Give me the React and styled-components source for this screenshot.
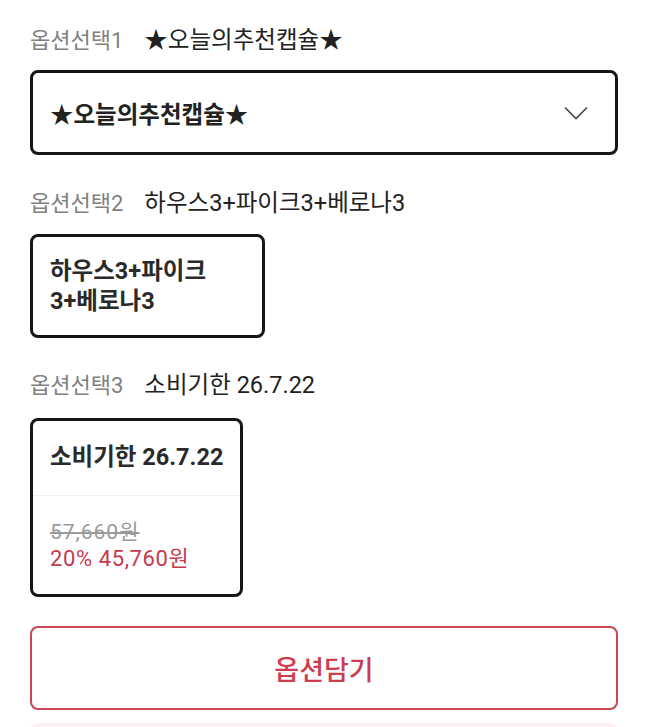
import styled, { createGlobalStyle } from "styled-components";

const GlobalStyle = createGlobalStyle`
  * { box-sizing: border-box; }
  body {
    margin: 0;
    background: #fff;
    font-family: Roboto, "Noto Sans CJK KR", "Noto Sans", sans-serif;
    color: #222;
  }
`

const Page = styled.div`
  padding: 25px 30px 0 30px;
  display: flex;
  flex-direction: column;
`

const Section = styled.div`
  display: flex;
  flex-direction: column;
  align-items: flex-start;
  margin-bottom: ${(p) => p.$gap || 32}px;
`

const Label = styled.div`
  display: flex;
  align-items: baseline;
  gap: 21px;
  height: 30px;
  line-height: 30px;
  margin-bottom: ${(p) => p.$space || 16}px;
`

const LabelKey = styled.span`
  font-size: 22px;
  color: #808080;
`

const LabelValue = styled.span`
  font-size: 23.5px;
  color: #222;
`

const Select = styled.div`
  width: 100%;
  height: 85px;
  border: 3px solid #161616;
  border-radius: 8px;
  display: flex;
  align-items: center;
  justify-content: space-between;
  padding: 0 27px 0 17px;
  font-size: 23.5px;
  font-weight: 700;
  color: #222;
`

const Chevron = () => (
  <svg width="24" height="14" viewBox="0 0 24 14" fill="none">
    <path d="M1 1.5 L12 12.5 L23 1.5" stroke="#444" strokeWidth="1.6" />
  </svg>
)

const Card = styled.div`
  width: ${(p) => p.$width}px;
  border: 3px solid #161616;
  border-radius: 8px;
  display: flex;
  flex-direction: column;
`

const CardText = styled.div`
  padding: 19px 22px 19px 17px;
  font-size: 23.5px;
  font-weight: 700;
  line-height: 30px;
  color: #2a2a2a;
`

const CardTitle = styled.div`
  padding: 22px 8px 24px 17px;
  font-size: 23.5px;
  font-weight: 700;
  line-height: 28px;
  color: #2a2a2a;
  border-bottom: 1px solid #efefef;
  white-space: nowrap;
`

const PriceBox = styled.div`
  padding: 23px 8px 21px 17px;
  display: flex;
  flex-direction: column;
`

const OldPrice = styled.div`
  font-size: 21px;
  letter-spacing: 1px;
  line-height: 26px;
  color: #9a9a9a;
  text-decoration: line-through;
`

const NewPrice = styled.div`
  font-size: 22px;
  letter-spacing: 0.6px;
  line-height: 28px;
  color: #c43a4e;
  white-space: nowrap;
`

const AddButton = styled.button`
  width: 100%;
  height: 84px;
  border: 2px solid #c94654;
  border-radius: 8px;
  background: #fff;
  color: #cc3e50;
  font-family: Roboto, "Noto Sans CJK KR", "Noto Sans", sans-serif;
  font-size: 27px;
  font-weight: 500;
  margin-bottom: 13px;
`

const NextBar = styled.div`
  width: 100%;
  height: 20px;
  background: #fdf0f2;
  border-radius: 8px 8px 0 0;
`

export default function App() {
  return (
    <>
      <GlobalStyle />
      <Page>
        <Section $gap={33}>
          <Label $space={15}>
            <LabelKey>옵션선택1</LabelKey>
            <LabelValue>★오늘의추천캡슐★</LabelValue>
          </Label>
          <Select>
            <span>★오늘의추천캡슐★</span>
            <Chevron />
          </Select>
        </Section>
        <Section>
          <Label>
            <LabelKey>옵션선택2</LabelKey>
            <LabelValue>하우스3+파이크3+베로나3</LabelValue>
          </Label>
          <Card $width={235}>
            <CardText>하우스3+파이크3+베로나3</CardText>
          </Card>
        </Section>
        <Section $gap={29}>
          <Label $space={18}>
            <LabelKey>옵션선택3</LabelKey>
            <LabelValue>소비기한 26.7.22</LabelValue>
          </Label>
          <Card $width={213}>
            <CardTitle>소비기한 26.7.22</CardTitle>
            <PriceBox>
              <OldPrice>57,660원</OldPrice>
              <NewPrice>20% 45,760원</NewPrice>
            </PriceBox>
          </Card>
        </Section>
        <AddButton>옵션담기</AddButton>
        <NextBar />
      </Page>
    </>
  )
}
